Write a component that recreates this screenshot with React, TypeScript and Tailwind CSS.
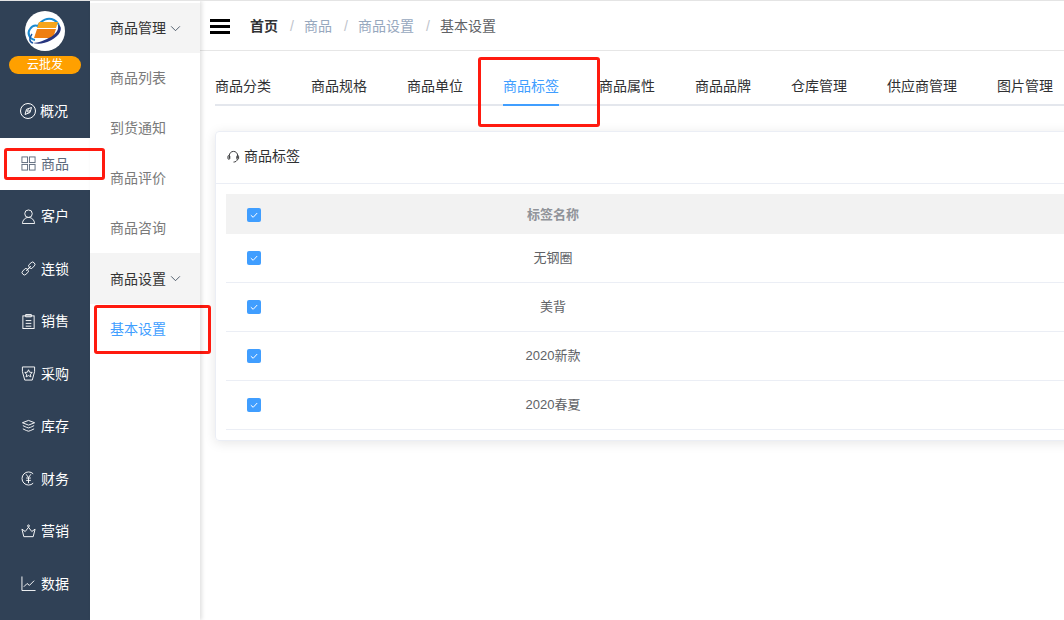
import React from 'react'

const Icon: React.FC<{ children: React.ReactNode; className?: string }> = ({ children, className }) => (
  <svg viewBox="0 0 16 16" fill="none" stroke="currentColor" strokeWidth="1" className={className ?? 'h-4 w-4 shrink-0'}>
    {children}
  </svg>
)

const navItems: { label: string; active?: boolean; icon: React.ReactNode }[] = [
  {
    label: '概况',
    icon: (
      <>
        <circle cx="8" cy="8" r="7.5" />
        <path d="M11.500 4.500 10 9.500 5 11.500 6.500 6.300z" />
        <circle cx="8.200" cy="8" r="1.200" />
      </>
    ),
  },
  {
    label: '商品',
    active: true,
    icon: (
      <>
        <rect x="1" y="1" width="6" height="6" />
        <rect x="9" y="1" width="6" height="6" />
        <rect x="1" y="9" width="6" height="6" />
        <rect x="9" y="9" width="6" height="6" />
      </>
    ),
  },
  {
    label: '客户',
    icon: (
      <>
        <circle cx="8" cy="5" r="4" />
        <path d="M1.500 15.500c.3-3.800 3-6.500 6.500-6.500s6.200 2.700 6.500 6.500z" />
      </>
    ),
  },
  {
    label: '连锁',
    icon: (
      <>
        <path d="M5.500 10.500 10.500 5.500" />
        <path d="M7 8.500 4.500 8 1.800 10.800a2.200 2.200 0 0 0 0 3.100l.3.300a2.200 2.200 0 0 0 3.100 0L8 11.500z" />
        <path d="M9 7.500l2.500.5 2.700-2.800a2.200 2.200 0 0 0 0-3.100l-.3-.3a2.200 2.200 0 0 0-3.100 0L8 4.500z" />
      </>
    ),
  },
  {
    label: '销售',
    icon: (
      <>
        <rect x="2" y="2" width="12" height="13.500" />
        <path d="M5 .5h6V3H5zM5 7h6M5 10h6M5 13h6" />
      </>
    ),
  },
  {
    label: '采购',
    icon: (
      <>
        <path d="M1.500 1h13v5L12 15H4L1.500 6z" />
        <path d="M8 4l1.200 2.600 2.800.3-2 1.900.5 2.800L8 10.200l-2.500 1.400.5-2.800-2-1.900 2.800-.3z" />
      </>
    ),
  },
  {
    label: '库存',
    icon: (
      <>
        <path d="M8 1.500 14.500 4 8 6.500 1.500 4z" />
        <path d="M2 7c1.500.6 3 1.800 6 2.500 3-.7 4.500-1.900 6-2.500" />
        <path d="M2 10.500c1.500.6 3 1.800 6 2.500 3-.7 4.500-1.900 6-2.500" />
      </>
    ),
  },
  {
    label: '财务',
    icon: (
      <>
        <path d="M13 3a7 7 0 1 0 0 10" />
        <path d="M5.500 3.500 8 7l2.500-3.500M5.500 7.500h5M5.500 10h5M8 7v6" />
      </>
    ),
  },
  {
    label: '营销',
    icon: (
      <>
        <path d="M1 5.500 4.500 8 8 3.500 11.500 8 15 5.500 13 13.500H3z" />
        <circle cx="8" cy="2" r="1" />
      </>
    ),
  },
  {
    label: '数据',
    icon: (
      <>
        <path d="M1 .5v15h14.500" />
        <path d="M3 11.500 6.500 8l2.500 2 5-5" />
      </>
    ),
  },
]

const tabs = ['商品分类', '商品规格', '商品单位', '商品标签', '商品属性', '商品品牌', '仓库管理', '供应商管理', '图片管理']

const rows = ['无钢圈', '美背', '2020新款', '2020春夏']

const Chevron = () => (
  <svg viewBox="0 0 12 8" fill="none" stroke="currentColor" className="ml-[4px] h-[7px] w-[11px] text-[#3d4a5c]">
    <path d="M1 1.500 6 6.500 11 1.500" />
  </svg>
)

const Checkbox = () => (
  <span className="flex h-[14px] w-[14px] items-center justify-center rounded-[2px] bg-[#409eff]">
    <svg viewBox="0 0 14 14" fill="none" stroke="white" strokeWidth="1" className="h-[14px] w-[14px]">
      <path d="M3.800 7.200 6.200 9.300 10.200 5" />
    </svg>
  </span>
)

const Logo = () => (
  <span className="flex h-10 w-10 items-center justify-center rounded-full bg-white">
    <svg viewBox="0 0 40 40" className="h-10 w-10">
      <path d="M10 29C4 28 2 22 5 18c2-3 5-4 8-3 3-6 10-9 16-6 4 2 6 6 5 10" fill="none" stroke="#1b8ad0" strokeWidth="2" />
      <path d="M14 11h19l-2 6H12z" fill="#f7a51c" />
      <path d="M12 18h19l-3 9H9z" fill="#ef7f12" />
      <path d="M8 32c9 3 23-3 27-11 2-4 0-7-2-7 1 4-1 8-7 12-6 3-13 6-18 6z" fill="#27357f" />
      <path d="M7 23c-3 4-3 8 1 9" fill="none" stroke="#1b5aa8" strokeWidth="1.500" />
    </svg>
  </span>
)

export default function App() {
  return (
    <div className="relative flex h-[620px] w-[1064px] overflow-hidden border-t border-[#e4e4e4] bg-white font-['Liberation_Sans','Noto_Sans_CJK_SC',sans-serif] text-sm">
      {/* first level menu */}
      <aside className="flex w-[90px] shrink-0 flex-col bg-[#304156] text-white">
        <div className="flex h-[84px] shrink-0 flex-col items-center pt-[10px]">
          <Logo />
          <span className="mt-[5px] flex h-[18px] w-[72px] items-center justify-center rounded-full bg-[#ffa000] text-xs leading-none">
            云批发
          </span>
        </div>
        {navItems.map((item, i) => (
          <div
            key={item.label}
            className={
              item.active
                ? 'flex h-[52.5px] shrink-0 items-center gap-[5px] bg-white pl-[21px] text-[#5d6a7c]'
                : i === 0
                  ? 'flex h-[52.5px] shrink-0 items-center gap-1 pl-5'
                  : 'flex h-[52.5px] shrink-0 items-center gap-[5px] pl-[21px]'
            }
          >
            <Icon className={i === 0 ? 'h-4 w-4 shrink-0' : 'h-[15px] w-[15px] shrink-0'}>{item.icon}</Icon>
            <span>{item.label}</span>
          </div>
        ))}
      </aside>

      {/* second level menu */}
      <nav className="z-10 flex w-[110px] shrink-0 flex-col pt-[2px] text-[#7a7a7a] shadow-[2px_0_4px_rgba(0,0,0,0.12)]">
        <div className="flex h-[50px] items-center bg-[#f4f4f4] pl-5 text-[#333]">
          商品管理
          <Chevron />
        </div>
        <div className="flex h-[50px] items-center pl-5">商品列表</div>
        <div className="flex h-[50px] items-center pl-5">到货通知</div>
        <div className="flex h-[50px] items-center pl-5">商品评价</div>
        <div className="flex h-[50px] items-center pl-5">商品咨询</div>
        <div className="flex h-[51px] items-center bg-[#f4f4f4] pl-5 text-[#333]">
          商品设置
          <Chevron />
        </div>
        <div className="flex h-[50px] items-center pl-5 text-[#409eff]">基本设置</div>
      </nav>

      {/* content */}
      <main className="flex min-w-0 flex-1 flex-col">
        <header className="flex h-[50px] shrink-0 items-center border-b border-[#e6e6e6] pl-[10px] pt-[1px]">
          <span className="flex h-[15px] w-5 flex-col justify-between">
            <span className="h-[3px] bg-black" />
            <span className="h-[3px] bg-black" />
            <span className="h-[3px] bg-black" />
          </span>
          <span className="ml-5 w-[28px] font-bold text-[#303133]">首页</span>
          <span className="w-[26px] pl-[2px] text-center text-[#c0c4cc]">/</span>
          <span className="text-[#97a8be]">商品</span>
          <span className="w-[26px] pl-[2px] text-center text-[#c0c4cc]">/</span>
          <span className="text-[#97a8be]">商品设置</span>
          <span className="w-[26px] pl-[2px] text-center text-[#c0c4cc]">/</span>
          <span className="text-[#606266]">基本设置</span>
        </header>

        <div className="ml-[15px] mt-[20px] flex h-[35px] shrink-0 gap-10 whitespace-nowrap border-b-2 border-[#e4e7ed] text-[#303133]">
          {tabs.map((tab) => (
            <span
              key={tab}
              className={
                tab === '商品标签'
                  ? '-mb-[2px] h-[35px] border-b-2 border-[#409eff] pt-[5px] text-[#409eff]'
                  : 'h-[35px] pt-[5px]'
              }
            >
              {tab}
            </span>
          ))}
        </div>

        <section className="ml-[15px] mt-[25px] h-[310px] w-[900px] shrink-0 rounded border border-[#ebeef5] shadow-[0_2px_12px_rgba(0,0,0,0.1)]">
          <div className="flex h-[52px] items-center border-b border-[#ebeef5] pb-[3px] pl-[11px] text-[#303133]">
            <svg viewBox="0 0 14 14" fill="none" stroke="#303133" className="mr-[4px] h-[13px] w-[13px]">
              <path d="M2.500 9V6a4.500 4.500 0 0 1 9 0v3" />
              <rect x="1" y="6" width="2" height="4" rx="1" />
              <rect x="10.500" y="6" width="2" height="4" rx="1" />
              <path d="M11 10c0 2-2 3-4 3" />
            </svg>
            商品标签
          </div>
          <div className="mx-[10px] mt-[10px]">
            <div className="flex h-10 items-center bg-[#f2f2f2] pl-[21px] pt-[2px] text-[13px] font-bold text-[#909399]">
              <Checkbox />
              <span className="w-[584px] text-center">标签名称</span>
            </div>
            {rows.map((row) => (
              <div key={row} className="flex h-[49px] items-center border-b border-[#ebeef5] pl-[21px] text-[13px] text-[#606266]">
                <Checkbox />
                <span className="w-[584px] text-center">{row}</span>
              </div>
            ))}
          </div>
        </section>
      </main>

      {/* red annotation boxes over the screenshot */}
      <div className="absolute left-[4px] top-[147px] h-[32px] w-[101px] rounded-[3px] border-[3px] border-[#ff1a0f]" />
      <div className="absolute left-[94px] top-[304px] h-[49px] w-[117px] rounded-[3px] border-[3px] border-[#ff1a0f]" />
      <div className="absolute left-[478px] top-[56px] h-[70px] w-[122px] rounded-[3px] border-[3px] border-[#ff1a0f]" />
    </div>
  )
}
